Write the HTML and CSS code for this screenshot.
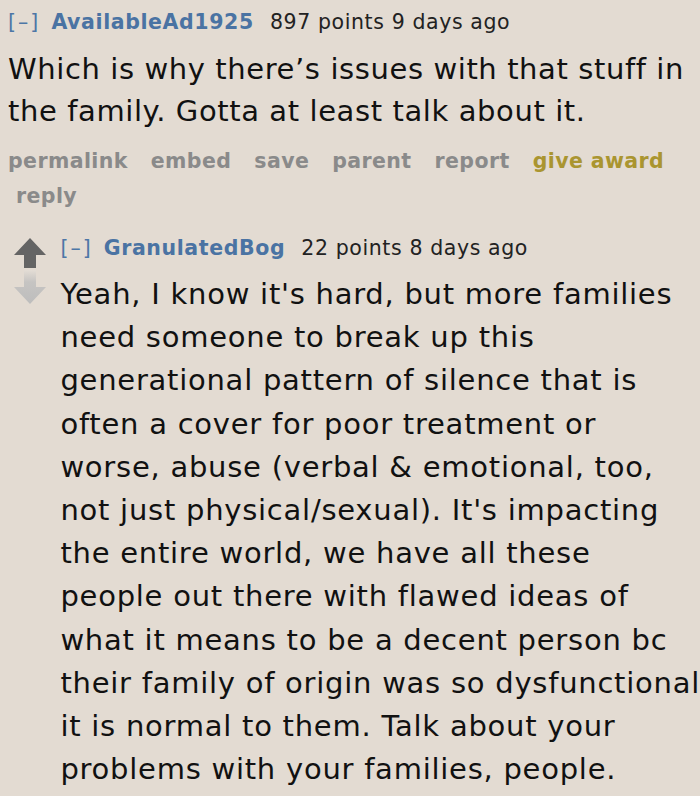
FILE: index.html
```html
<!DOCTYPE html>
<html>
<head>
<meta charset="utf-8">
<link rel="stylesheet" href="styles.css">
</head>
<body>
<div class="comment">
  <div class="tagline"><span class="expand">[–]</span> <span class="author">AvailableAd1925</span> <span class="meta">897 points 9 days ago</span></div>
  <div class="body first-body">Which is why there’s issues with that stuff in<br>the family. Gotta at least talk about it.</div>
  <ul class="buttons">
    <li>permalink</li><li>embed</li><li>save</li><li>parent</li><li>report</li><li class="award">give award</li><li>reply</li>
  </ul>
  <div class="child">
    <div class="votes">
      <svg class="arrow" width="34" height="32" viewBox="0 0 34 32"><path d="M17 1 L33 18 L23 18 L23 31 L11 31 L11 18 L1 18 Z" fill="#646464"/></svg>
      <svg class="arrow" width="34" height="36" viewBox="0 0 34 36"><defs><linearGradient id="g" x1="0" y1="0" x2="0" y2="1"><stop offset="0" stop-color="#e4ddd5"/><stop offset="0.35" stop-color="#c6c4c2"/><stop offset="1" stop-color="#bdbdbd"/></linearGradient></defs><path d="M11 1 L23 1 L23 18 L33 18 L17 35 L1 18 L11 18 Z" fill="url(#g)"/></svg>
    </div>
    <div class="entry">
      <div class="tagline"><span class="expand">[–]</span> <span class="author">GranulatedBog</span> <span class="meta">22 points 8 days ago</span></div>
      <div class="body child-body">Yeah, I know it's hard, but more families<br>need someone to break up this<br>generational pattern of silence that is<br>often a cover for poor treatment or<br>worse, abuse (verbal &amp; emotional, too,<br>not just physical/sexual). It's impacting<br>the entire world, we have all these<br>people out there with flawed ideas of<br>what it means to be a decent person bc<br>their family of origin was so dysfunctional<br>it is normal to them. Talk about your<br>problems with your families, people.</div>
    </div>
  </div>
</div>
</body>
</html>
```

FILE: styles.css
```css
html, body {
  margin: 0;
  padding: 0;
  background: #e3dbd2;
}
body {
  font-family: "DejaVu Sans", Verdana, sans-serif;
  color: #111;
  width: 700px;
  height: 796px;
  overflow: hidden;
}
.comment {
  padding: 8px 0 0 8px;
}
.tagline {
  font-size: 20.5px;
  line-height: 28px;
  white-space: nowrap;
  letter-spacing: 0.6px;
}
.expand {
  color: #4d76a6;
  letter-spacing: 2px;
}
.author {
  color: #4a73a3;
  font-weight: bold;
  margin-left: 4px;
}
.meta {
  color: #222;
  margin-left: 9px;
}
.body {
  font-size: 29px;
  color: #111;
  white-space: nowrap;
}
.first-body {
  line-height: 42px;
  margin-top: 12px;
  letter-spacing: 0.6px;
}
.buttons {
  list-style: none;
  margin: 12px 0 0 0;
  padding: 0;
  display: flex;
  flex-wrap: wrap;
  font-size: 20.5px;
  font-weight: bold;
  line-height: 35px;
  color: #8a8a8a;
  letter-spacing: 0.4px;
  width: 690px;
}
.buttons li {
  padding: 0 15px 0 8px;
}
.buttons li:first-child {
  padding-left: 0;
}
.buttons .award {
  color: #aa9530;
}
.child {
  display: flex;
  margin-top: 20px;
  margin-left: 5px;
}
.votes {
  width: 51px;
  display: flex;
  flex-direction: column;
  padding-top: 3px;
}
.arrow {
  display: block;
}
.entry {
  flex: 1;
}
.child-body {
  line-height: 43.2px;
  margin-top: 11px;
  letter-spacing: 0.75px;
}
```
